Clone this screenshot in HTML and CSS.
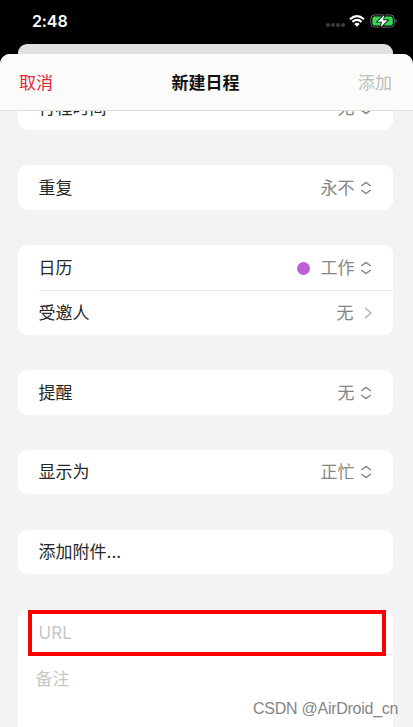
FILE: index.html
```
<!DOCTYPE html>
<html lang="zh-CN">
<head>
<meta charset="utf-8">
<title>新建日程</title>
<link rel="stylesheet" href="styles.css">
</head>
<body>
<svg class="defs" width="0" height="0">
  <symbol id="updown" viewBox="0 0 12 14"><path d="M1.2 5 L6 1.4 L10.8 5 M1.2 9 L6 12.6 L10.8 9"/></symbol>
  <symbol id="right" viewBox="0 0 8 12"><path d="M1 .8 L7 6 L1 11.2"/></symbol>
</svg>
<div class="phone">
  <div class="status">
    <span class="time">2:48</span>
    <div class="indicators">
      <div class="dots"><i></i><i></i><i></i><i></i></div>
      <svg class="wifi" width="16" height="12" viewBox="0 0 16 12"><path d="M1 4.3 Q8 -1.9 15 4.3 M3.4 6.9 Q8 2.9 12.6 6.9"/><path class="fill" d="M5.3 9 Q8 6.7 10.7 9 L8 11.8Z"/></svg>
      <svg class="battery" width="28" height="14" viewBox="0 0 28 14"><rect x=".8" y=".9" width="23.6" height="12.2" rx="3.8" fill="none" stroke="#666a68" stroke-width="1"/><rect x="2.4" y="2.5" width="20.4" height="9" rx="2.3" fill="#35d957"/><path d="M25.6 5 Q27 5.3 27 7 Q27 8.7 25.6 9Z" fill="#666a68"/><path d="M14.3 .7 L7.5 7.7 H12 L10.6 13.3 L17.6 6.2 H13.1Z" fill="#fff" stroke="#000" stroke-width="1.6" paint-order="stroke"/></svg>
    </div>
  </div>
  <div class="back-sheet"></div>
  <main class="sheet">
    <header class="bar"><span class="cancel">取消</span><h1>新建日程</h1><span class="add">添加</span></header>
    <div class="scroll">
      <section class="card first"><div class="row"><span>行程时间</span><span class="value">无<svg class="updown"><use href="#updown"/></svg></span></div></section>
      <section class="card"><div class="row"><span>重复</span><span class="value">永不<svg class="updown"><use href="#updown"/></svg></span></div></section>
      <section class="card">
        <div class="row"><span>日历</span><span class="value"><i class="dot"></i>工作<svg class="updown"><use href="#updown"/></svg></span></div>
        <div class="row divided"><span>受邀人</span><span class="value">无<svg class="right"><use href="#right"/></svg></span></div>
      </section>
      <section class="card"><div class="row"><span>提醒</span><span class="value">无<svg class="updown"><use href="#updown"/></svg></span></div></section>
      <section class="card"><div class="row"><span>显示为</span><span class="value">正忙<svg class="updown"><use href="#updown"/></svg></span></div></section>
      <section class="card"><div class="row"><span>添加附件...</span></div></section>
      <section class="card last">
        <div class="row placeholder url">URL<div class="highlight"></div></div>
        <div class="row placeholder divided notes">备注</div>
      </section>
    </div>
  </main>
  <div class="watermark">CSDN @AirDroid_cn</div>
</div>
</body>
</html>
```

FILE: styles.css
```
* { box-sizing: border-box; }
body { margin: 0; background: #000; font-family: Inter, "Noto Sans CJK SC", sans-serif; font-size: 17px; color: #262727; }
.defs { position: absolute; }
.phone { position: relative; width: 413px; height: 727px; overflow: hidden; display: flex; flex-direction: column; background: #000; }
.status { height: 44px; flex: none; display: flex; justify-content: space-between; padding: 11px 15px 0 32px; }
.time { color: #fff; font-size: 16px; font-weight: 600; line-height: 21px; letter-spacing: -.1px; }
.indicators { display: flex; align-items: flex-start; padding-top: 3px; }
.dots { display: flex; gap: 1px; padding-top: 9px; margin-right: 4px; }
.dots i { width: 4px; height: 4px; border-radius: 50%; background: #3d3d3e; }
.wifi { fill: none; stroke: #fff; stroke-width: 2.1; margin-right: 5px; margin-top: 1px; }
.wifi .fill { fill: #fff; stroke: none; }
.back-sheet { flex: none; height: 24px; margin: 0 20px 0 18px; border-radius: 9px 9px 0 0; background: #e0e1df; }
.sheet { flex: 1; min-height: 0; margin-top: -14px; border-radius: 10px 10px 0 0; overflow: hidden; background: #f2f3f5; display: flex; flex-direction: column; }
.bar { flex: none; height: 57px; display: grid; grid-template-columns: 1fr auto 1fr; align-items: center; padding: 0 21px 1px 19px; background: #fbfcfa; border-bottom: 1px solid #dcdddd; }
.bar h1 { margin: 0; font-size: 17px; font-weight: 600; color: #111; }
.cancel { color: #df2638; }
.add { color: #bdbebc; text-align: right; }
.scroll { flex: 1; min-height: 0; overflow: hidden; padding: 0 20px 0 18.4px; display: flex; flex-direction: column; gap: 35.2px; }
.card { flex: none; background: #fefffe; border-radius: 9px; }
.card.first { margin-top: -25.4px; }
.card.last { height: 140px; }
.row { height: 44.7px; margin-left: 20.2px; padding: .6px 20.6px 0 0; display: flex; align-items: center; justify-content: space-between; line-height: 24px; white-space: nowrap; }
.divided { border-top: 1px solid #e3e5e3; }
.value { display: flex; align-items: center; color: #858684; }
.value svg { fill: none; stroke: #858684; stroke-width: 1.5; }
.value .updown { width: 12px; height: 14px; margin-left: 6px; }
.value .right { width: 8px; height: 12px; margin-left: 11px; stroke: #b9bab9; stroke-width: 1.6; }
.dot { width: 13px; height: 13px; border-radius: 50%; background: #bd60d8; margin-right: 10px; }
.placeholder { color: #c7c8c5; }
.url { position: relative; padding-top: 3px; }
.highlight { position: absolute; left: -10.6px; top: 0; width: 358px; height: 46px; border: 4px solid #fa0000; }
.notes { text-indent: -3px; padding-top: 4px; }
.watermark { position: absolute; left: 253px; top: 699px; font: 16px/20px "Liberation Sans", sans-serif; letter-spacing: -.26px; color: #858585; white-space: nowrap; }
```
